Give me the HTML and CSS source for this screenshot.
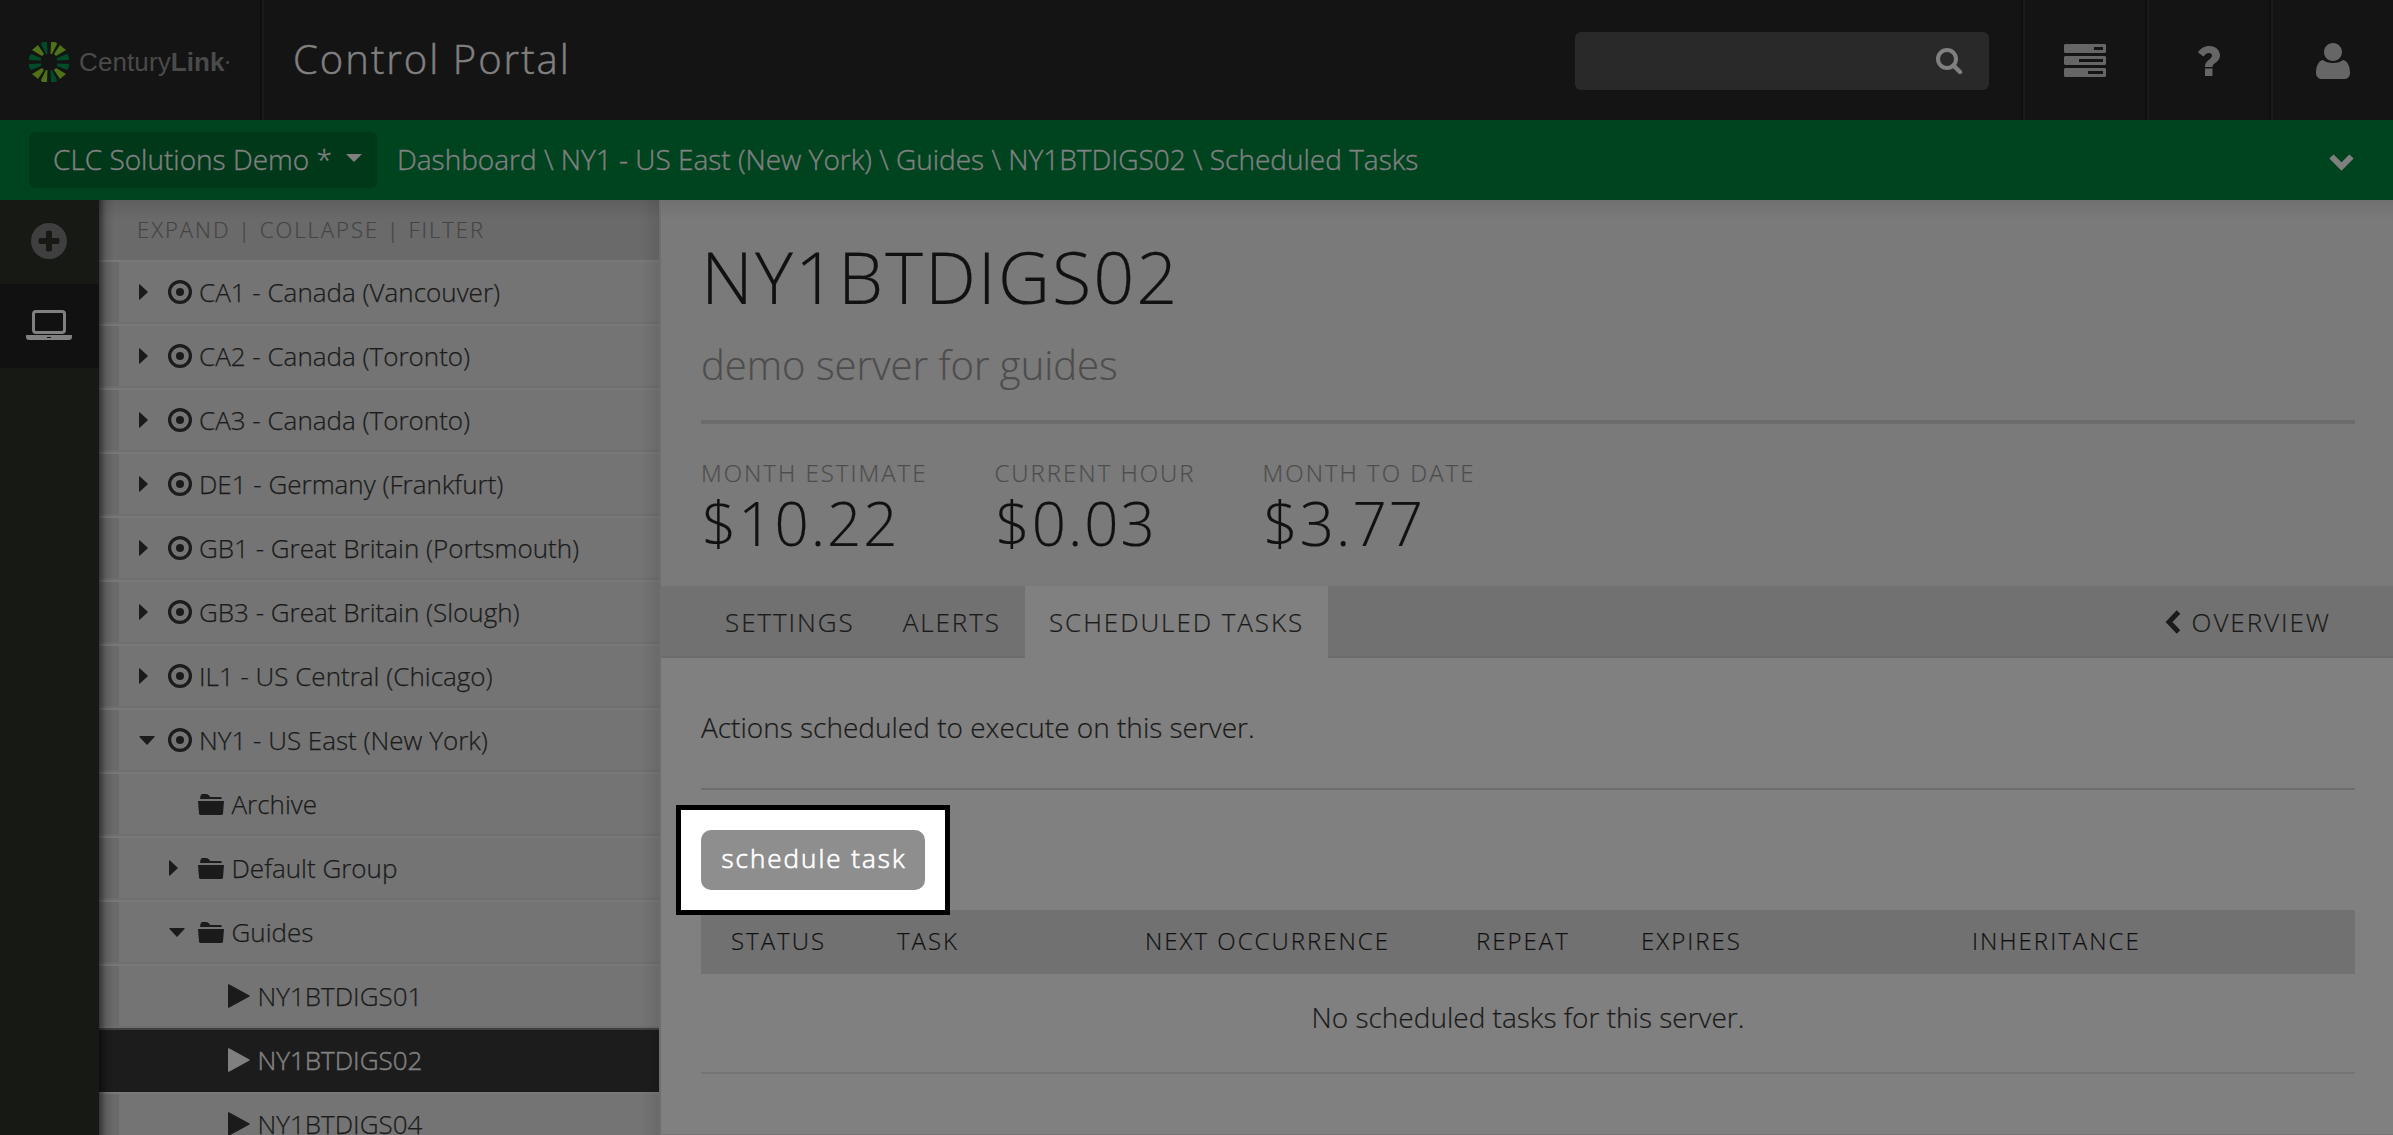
FILE: index.html
```html
<!DOCTYPE html>
<html lang="en">
<head>
<meta charset="utf-8">
<title>Control Portal</title>
<link rel="stylesheet" href="styles.css">
</head>
<body>
<svg class="defs" width="0" height="0">
  <symbol id="target" viewBox="0 0 24 24"><circle cx="12" cy="12" r="10.4" fill="none" stroke="currentColor" stroke-width="3.2"/><circle cx="12" cy="12" r="4" fill="currentColor"/></symbol>
  <symbol id="right" viewBox="0 0 9 16"><path d="M0 1Q0 0 1 .5L9 8L1 15.500Q0 16 0 15Z" fill="currentColor"/></symbol>
  <symbol id="down" viewBox="0 0 16 9"><path d="M1 0H15Q16 0 15.500 1L8 9L.5 1Q0 0 1 0Z" fill="currentColor"/></symbol>
  <symbol id="play" viewBox="0 0 22 24"><path d="M0 1Q0 0 1 .3L21.500 11.500Q22 12 21.500 12.500L1 23.700Q0 24 0 23Z" fill="currentColor"/></symbol>
  <symbol id="folder" viewBox="0 0 26 21"><path d="M2 5L2.500 2Q2.800 0 4.500 0H8.500Q10 0 11 1.500Q12 3 13 3H22Q24 3 24 5ZM0 7H26L25 19.500Q24.800 21 23.500 21H2.500Q1.200 21 1 19.500Z" fill="currentColor"/></symbol>
</svg>
<header class="top">
  <div class="brand">
    <svg class="burst" viewBox="-20 -20 40 40">
      <g fill="#4f7218"><path d="M1.500 -8L2 -20H5Q8 -20 8 -18L3 -8Z"/><path d="M5 -8L11 -17L17 -12L7 -6Z"/><path d="M5 8L11 17L17 12L7 6Z"/><path d="M-5 -8L-11 -17L-17 -12L-7 -6Z"/><path d="M-5 8L-11 17L-17 12L-7 6Z"/><path d="M-1.500 8L-2 20H-5Q-8 20 -8 18L-3 8Z"/></g>
      <g fill="#014c27"><path d="M-1.500 -8L-2 -20H-5Q-8 -20 -8 -18L-3 -8Z"/><path d="M1.500 8L2 20H5Q8 20 8 18L3 8Z"/><path d="M8 -1.500L20 -2V-5L18 -8L8 -4Z"/><path d="M8 1.500L20 2V5L18 8L8 4Z"/><path d="M-8 -1.500L-20 -2V-5L-18 -8L-8 -4Z"/><path d="M-8 1.500L-20 2V5L-18 8L-8 4Z"/></g>
    </svg>
    <span class="wordmark">Century<b>Link</b><i>•</i></span>
  </div>
  <h1 class="portal">Control Portal</h1>
  <div class="search"><svg width="27" height="27" viewBox="0 0 27 27"><circle cx="11" cy="11" r="9" fill="none" stroke="currentColor" stroke-width="4"/><path d="M17.500 17.500L24 24" stroke="currentColor" stroke-width="4.400" stroke-linecap="round"/></svg></div>
  <nav class="tools">
    <a><svg width="42" height="33" viewBox="0 0 42 33"><path fill="currentColor" fill-rule="evenodd" d="M1 0H41L42 1V8L41 9H1L0 8V1ZM30 3V6H39V3ZM1 12H41L42 13V20L41 21H1L0 20V13ZM15 15V18H39V15ZM1 24H41L42 25V32L41 33H1L0 32V25ZM24 27V30H39V27Z"/></svg></a>
    <a class="low"><svg width="23" height="30" viewBox="0 0 23 30"><path fill="currentColor" d="M0 6.500C2.500 2.500 6 0 11.500 0C17.500 0 22 4 22 9.500C22 16.500 14.500 16.500 14.500 21H7C6.500 14.500 14 13.500 14 9.500C14 6 8.500 6 5.500 10.500ZM7 22.500H14.500V30H7Z"/></svg></a>
    <a class="low"><svg width="34" height="36" viewBox="0 0 34 36"><path fill="currentColor" d="M17 0C22 0 26 4 26 9C26 14 22 18 17 18S8 14 8 9C8 4 12 0 17 0ZM7 17C9 19 13 20 17 20S25 19 27 17C32 18 34 24 34 30C34 34 31 36 28 36H6C3 36 0 34 0 30C0 24 2 18 7 17Z"/></svg></a>
  </nav>
</header>
<div class="crumbs">
  <button class="account"><span>CLC Solutions Demo *</span><svg width="16" height="8" viewBox="0 0 16 8"><path d="M0 0H16L8 8Z" fill="currentColor"/></svg></button>
  <span class="trail">Dashboard \ NY1 - US East (New York) \ Guides \ NY1BTDIGS02 \ Scheduled Tasks</span>
  <svg class="chev" width="25" height="17" viewBox="0 0 25 17"><path d="M2.500 2.500L12.500 12.500L22.500 2.500" fill="none" stroke="currentColor" stroke-width="6"/></svg>
</div>
<div class="body">
  <nav class="rail">
    <a><svg width="36" height="36" viewBox="0 0 36 36"><path fill="currentColor" fill-rule="evenodd" d="M18 0A18 18 0 1 1 18 36A18 18 0 1 1 18 0ZM15 9V15H9Q7.500 15 7.500 18T9 21H15V27Q15 28.500 18 28.500T21 27V21H27Q28.500 21 28.500 18T27 15H21V9Q21 7.500 18 7.500T15 9Z"/></svg></a>
    <a class="on"><svg width="46" height="30" viewBox="0 0 46 30"><rect x="7.500" y="1.500" width="31" height="21" rx="2.500" fill="none" stroke="currentColor" stroke-width="3"/><path fill="currentColor" fill-rule="evenodd" d="M0 25H46V27Q46 30 43 30H3Q0 30 0 27ZM21 27V28H25V27Z"/></svg></a>
  </nav>
  <aside class="side">
    <div class="filter">EXPAND | COLLAPSE | FILTER</div>
    <ul class="tree">
      <li><svg class="r"><use href="#right"/></svg><svg class="t"><use href="#target"/></svg>CA1 - Canada (Vancouver)</li>
      <li><svg class="r"><use href="#right"/></svg><svg class="t"><use href="#target"/></svg>CA2 - Canada (Toronto)</li>
      <li><svg class="r"><use href="#right"/></svg><svg class="t"><use href="#target"/></svg>CA3 - Canada (Toronto)</li>
      <li><svg class="r"><use href="#right"/></svg><svg class="t"><use href="#target"/></svg>DE1 - Germany (Frankfurt)</li>
      <li><svg class="r"><use href="#right"/></svg><svg class="t"><use href="#target"/></svg>GB1 - Great Britain (Portsmouth)</li>
      <li><svg class="r"><use href="#right"/></svg><svg class="t"><use href="#target"/></svg>GB3 - Great Britain (Slough)</li>
      <li><svg class="r"><use href="#right"/></svg><svg class="t"><use href="#target"/></svg>IL1 - US Central (Chicago)</li>
      <li><svg class="d"><use href="#down"/></svg><svg class="t"><use href="#target"/></svg>NY1 - US East (New York)</li>
      <li class="l2"><span class="r"></span><svg class="f"><use href="#folder"/></svg>Archive</li>
      <li class="l2"><svg class="r"><use href="#right"/></svg><svg class="f"><use href="#folder"/></svg>Default Group</li>
      <li class="l2"><svg class="d"><use href="#down"/></svg><svg class="f"><use href="#folder"/></svg>Guides</li>
      <li class="l3"><svg class="p"><use href="#play"/></svg>NY1BTDIGS01</li>
      <li class="l3 on"><svg class="p"><use href="#play"/></svg>NY1BTDIGS02</li>
      <li class="l3"><svg class="p"><use href="#play"/></svg>NY1BTDIGS04</li>
    </ul>
  </aside>
  <main class="main">
    <section class="summary">
      <h2>NY1BTDIGS02</h2>
      <p class="desc">demo server for guides</p>
      <div class="stats">
        <div><span>MONTH ESTIMATE</span><strong>$10.22</strong></div>
        <div><span>CURRENT HOUR</span><strong>$0.03</strong></div>
        <div><span>MONTH TO DATE</span><strong>$3.77</strong></div>
      </div>
    </section>
    <nav class="tabs">
      <a>SETTINGS</a><a>ALERTS</a><a class="on">SCHEDULED TASKS</a>
      <a class="back"><svg width="16" height="24" viewBox="0 0 16 24"><path d="M13.500 2L4 12L13.500 22" fill="none" stroke="currentColor" stroke-width="5"/></svg>OVERVIEW</a>
    </nav>
    <section class="content">
      <p class="intro">Actions scheduled to execute on this server.</p>
      <div class="action"><button class="schedule">schedule task</button></div>
      <div class="thead"><span>STATUS</span><span>TASK</span><span>NEXT OCCURRENCE</span><span>REPEAT</span><span>EXPIRES</span><span>INHERITANCE</span></div>
      <p class="empty">No scheduled tasks for this server.</p>
    </section>
  </main>
</div>
</body>
</html>
```
FILE: styles.css
```css
* { box-sizing: border-box; margin: 0; padding: 0; }
body { width: 2393px; height: 1135px; overflow: hidden; display: flex; flex-direction: column; background: #808080; color: #1a1b1a; font: 300 28px/1 "Open Sans", sans-serif; }
button { border: 0; font: inherit; color: inherit; }
svg { display: block; flex: none; }
.defs { position: absolute; }

.top { display: flex; flex: none; align-items: center; height: 120px; background: #141414; color: #808080; }
.brand { display: flex; align-items: center; width: 262px; height: 120px; padding: 3px 0 0 29px; border-right: 2px solid #0f0f0f; box-shadow: 2px 0 #1a1a1a; }
.burst { width: 40px; height: 40px; margin-right: 10px; }
.wordmark { color: #4a4a4a; font: 26px/40px "Liberation Sans", Arial, sans-serif; letter-spacing: .1px; }
.wordmark i { font-size: 11px; vertical-align: 5px; margin-left: 1px; }
.portal { margin-left: 31px; padding-bottom: 3px; font-size: 40px; font-weight: 300; line-height: 117px; letter-spacing: 2px; -webkit-text-stroke: .5px; }
.search { display: flex; align-items: center; justify-content: flex-end; width: 414px; height: 58px; margin: 2px 32px 0 auto; padding-right: 26px; border-radius: 6px; background: #292929; }
.tools { display: flex; color: #666; }
.tools a { display: flex; align-items: center; justify-content: center; width: 124px; height: 120px; padding-left: 2px; border-left: 2px solid #0f0f0f; box-shadow: inset 2px 0 #1a1a1a; }
.tools .low { padding-top: 2px; }

.crumbs { display: flex; flex: none; align-items: center; height: 80px; padding: 0 39px 0 29px; background: #00431f; color: #808080; -webkit-text-stroke: .4px; }
.account { display: flex; align-items: center; gap: 14px; width: 348px; height: 56px; margin-right: 20px; padding-left: 24px; border-radius: 6px; background: #003819; }
.account span, .trail { padding-bottom: 2px; }
.account svg { margin-top: -4px; }
.chev { margin: 4px 0 0 auto; }

.body { display: flex; flex: 1; min-height: 0; }
.rail { width: 99px; flex: none; background: #171915; color: #3f3f3f; }
.rail a { display: flex; align-items: center; justify-content: center; height: 84px; padding: 0 1px 2px 0; }
.rail a.on { background: #111; color: #808080; }
.side { position: relative; width: 562px; flex: none; border-right: 2px solid #6e6e6e; background: #747474; }
.side::after { content: ""; position: absolute; inset: 0; background: linear-gradient(rgba(0,0,0,.1), transparent 20px), linear-gradient(90deg, rgba(0,0,0,.5), rgba(0,0,0,.12) 7px, transparent 15px, transparent 542px, rgba(0,0,0,.09)); }
.filter { height: 60px; padding-left: 38px; background: #6a6a6a; color: #444; font-size: 22px; line-height: 59px; letter-spacing: 2px; -webkit-text-stroke: .2px; }
.tree { list-style: none; font-size: 26px; -webkit-text-stroke: .25px; }
.tree li { display: flex; align-items: center; height: 64px; padding-left: 40px; border-top: 2px solid #797979; border-bottom: 2px solid #6e6e6e; box-shadow: inset 20px 0 #6a6a6a; white-space: pre; }
.tree .l2 { padding-left: 70px; }
.tree .l3 { padding-left: 129px; }
.tree .on { border-color: #3f3f3f #1c1c1c #1c1c1c; box-shadow: none; background: #1c1c1c; color: #808080; -webkit-text-stroke: .5px; }
.r { width: 9px; height: 16px; margin-right: 20px; }
.d { width: 16px; height: 9px; margin-right: 13px; }
.t { width: 24px; height: 24px; margin-right: 7px; }
.f { width: 26px; height: 21px; margin-right: 7.5px; }
.p { width: 22px; height: 24px; margin-right: 7.5px; }

.main { flex: 1; min-width: 0; background: #808080; border-bottom: 1px solid #747474; -webkit-text-stroke: .2px; }
.summary { height: 386px; padding: 42px 38px 0 40px; background: linear-gradient(#707070, #7a7a7a 20px); color: #111; }
.summary h2 { font-size: 72px; font-weight: 300; line-height: 68px; letter-spacing: 2px; }
.desc { height: 114px; padding-top: 31px; border-bottom: 4px solid #6c6c6c; color: #4d4d4d; font-size: 40px; line-height: 48px; }
.stats { display: flex; gap: 67px; padding-top: 33px; }
.stats span { display: block; color: #4d4d4d; font-size: 24px; line-height: 32px; letter-spacing: 2px; }
.stats strong { display: block; padding-left: 1px; font-size: 60px; font-weight: 300; line-height: 68px; letter-spacing: 2px; }
.tabs { display: flex; height: 72px; padding: 0 38px 0 40px; background: #717171; box-shadow: inset 0 -2px #6c6c6c; font-size: 26px; line-height: 72px; letter-spacing: 1.950px; }
.tabs a { padding: 0 24px; }
.tabs .on { background: #808080; }
.tabs .back { display: flex; align-items: center; gap: 11px; margin-left: auto; }
.content { padding: 0 38px 0 40px; }
.intro { height: 132px; padding-top: 49px; border-bottom: 2px solid #6e6e6e; line-height: 40px; }
.action { position: relative; width: 274px; height: 110px; margin: 15px 0 -5px -25px; padding: 20px; border: 5px solid #000; background: #fff; }
.schedule { width: 224px; height: 60px; padding: 0 0 5px 2px; border-radius: 10px; background: #8e8e8e; color: #fff; font-size: 26px; letter-spacing: 2px; -webkit-text-stroke: .7px; }
.thead { display: grid; grid-template-columns: 166px 248px 331px 165px 331px 1fr; height: 64px; padding-left: 30px; background: #717171; color: #111; font-size: 24px; line-height: 61px; letter-spacing: 2px; }
.empty { height: 100px; border-bottom: 2px solid #747474; line-height: 86px; text-align: center; }
```
